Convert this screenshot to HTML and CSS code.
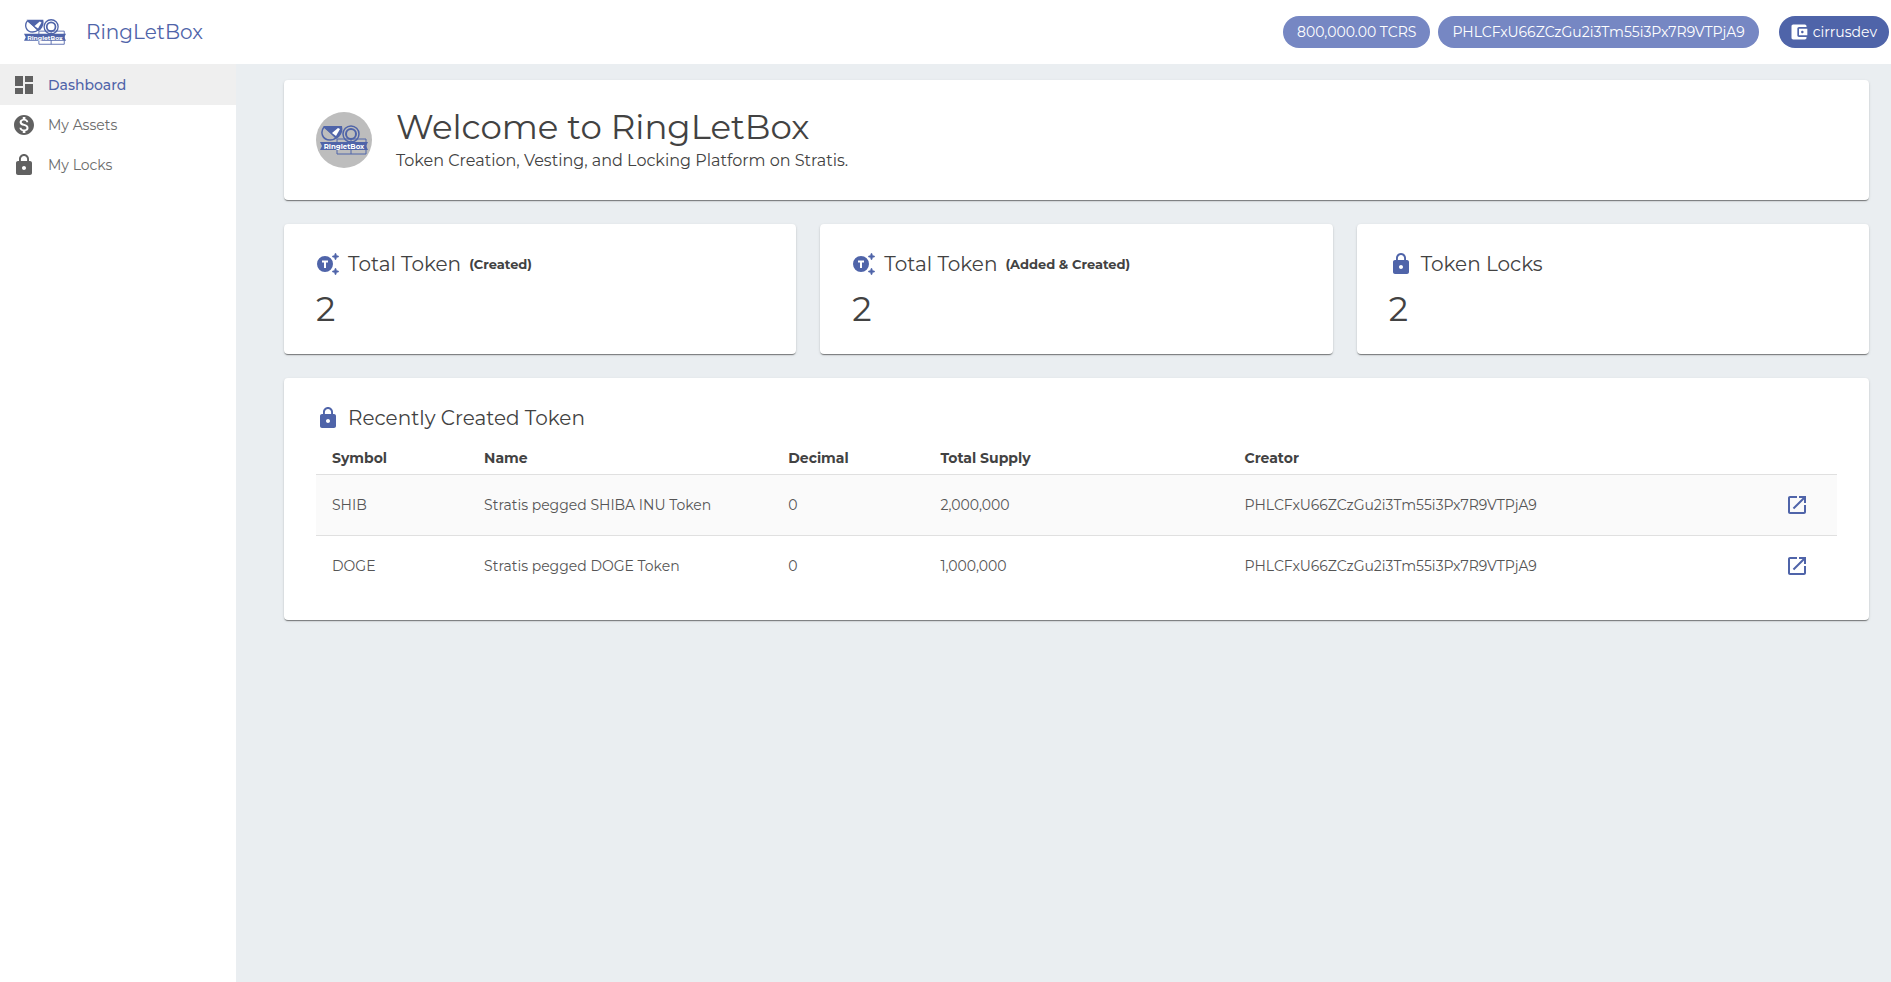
FILE: index.html
```html
<!DOCTYPE html>
<html lang="en">
<head>
<meta charset="utf-8">
<meta name="viewport" content="width=device-width, initial-scale=1">
<title>RingLetBox</title>
<link rel="stylesheet" href="styles.css">
</head>
<body>
<svg class="sprite" aria-hidden="true">
  <symbol id="logo" viewBox="0 0 48 30">
    <g fill="none" stroke="currentColor">
      <path d="M4 2c-4 5-2 13 6 13 3 0 5-1 7-3M4 2l13 11" stroke-width="1.500"/>
      <circle cx="31" cy="9" r="8" stroke-width="1.500"/>
      <circle cx="31" cy="9" r="5" stroke-width="2"/>
      <path d="M17 14h29v15H17zM31 14v15"/>
    </g>
    <path d="M3 1h19c1 4 0 8-3 11l-3 2z" fill="currentColor"/>
    <path d="M12 8l6-5 2 1-4 7z" fill="#fff"/>
    <path d="M0 17h48l-2 4 2 4H0l2-4z" fill="currentColor"/>
    <text class="logo-text" x="24" y="24" text-anchor="middle">RingletBox</text>
  </symbol>
  <symbol id="lock" viewBox="0 0 24 24">
    <path d="M18 8h-1V6c0-2.760-2.240-5-5-5S7 3.240 7 6v2H6c-1.100 0-2 .9-2 2v10c0 1.100.9 2 2 2h12c1.100 0 2-.9 2-2V10c0-1.100-.9-2-2-2zm-6 9c-1.100 0-2-.9-2-2s.9-2 2-2 2 .9 2 2-.9 2-2 2zm3.100-9H8.900V6c0-1.710 1.390-3.100 3.100-3.100s3.100 1.390 3.100 3.100v2z"/>
  </symbol>
  <symbol id="token" viewBox="0 0 24 24">
    <path d="M9 4a8 8 0 1 0 0 16A8 8 0 0 0 9 4zm3 6.500h-2V16H8v-5.500H6v-2h6z"/>
    <path d="M19.500 1l1.100 2.400L23 4.500l-2.400 1.100L19.500 8l-1.100-2.400L16 4.500l2.400-1.100zM19.500 16l1.100 2.400 2.400 1.100-2.400 1.100-1.100 2.400-1.100-2.400-2.400-1.100 2.400-1.100z" stroke="currentColor" stroke-width=".6"/>
  </symbol>
  <symbol id="open" viewBox="0 0 24 24">
    <path d="M19 19H5V5h7V3H5c-1.110 0-2 .9-2 2v14c0 1.100.89 2 2 2h14c1.100 0 2-.9 2-2v-7h-2v7zM14 3v2h3.590l-9.830 9.830 1.410 1.410L19 6.410V10h2V3h-7z"/>
  </symbol>
</svg>

<header class="appbar">
  <svg class="brand-logo"><use href="#logo"/></svg>
  <a class="brand" href="#">RingLetBox</a>
  <div class="account">
    <span class="chip">800,000.00 TCRS</span>
    <span class="chip">PHLCFxU66ZCzGu2i3Tm55i3Px7R9VTPjA9</span>
    <button class="chip chip-wallet" type="button">
      <svg class="chip-icon" viewBox="0 0 24 24"><path d="M21 18v1c0 1.100-.9 2-2 2H5c-1.110 0-2-.9-2-2V5c0-1.100.89-2 2-2h14c1.100 0 2 .9 2 2v1h-9c-1.110 0-2 .9-2 2v8c0 1.100.89 2 2 2h9zm-9-2h10V8H12v8zm4-2.500c-.83 0-1.500-.67-1.500-1.500s.67-1.500 1.500-1.500 1.500.67 1.500 1.500-.67 1.500-1.500 1.500z"/></svg>
      cirrusdev
    </button>
  </div>
</header>

<div class="layout">
  <nav class="sidebar">
    <a class="nav-link active" href="#">
      <svg class="icon" viewBox="0 0 24 24"><path d="M3 13h8V3H3v10zm0 8h8v-6H3v6zm10 0h8V11h-8v10zm0-18v6h8V3h-8z"/></svg>
      Dashboard
    </a>
    <a class="nav-link" href="#">
      <svg class="icon" viewBox="0 0 24 24"><path d="M12 2C6.480 2 2 6.480 2 12s4.480 10 10 10 10-4.480 10-10S17.520 2 12 2zm1.410 16.090V20h-2.670v-1.930c-1.710-.36-3.160-1.460-3.270-3.400h1.960c.1 1.050.82 1.870 2.650 1.870 1.960 0 2.400-.98 2.400-1.590 0-.83-.44-1.610-2.670-2.140-2.480-.6-4.180-1.620-4.180-3.670 0-1.720 1.390-2.840 3.110-3.210V4h2.670v1.950c1.860.45 2.790 1.860 2.850 3.390H14.300c-.05-1.110-.64-1.870-2.220-1.870-1.500 0-2.400.68-2.400 1.640 0 .84.65 1.390 2.670 1.910s4.180 1.390 4.180 3.910c-.01 1.830-1.380 2.830-3.120 3.160z"/></svg>
      My Assets
    </a>
    <a class="nav-link" href="#">
      <svg class="icon"><use href="#lock"/></svg>
      My Locks
    </a>
  </nav>

  <main class="content">
    <section class="card welcome">
      <div class="avatar"><svg class="avatar-logo"><use href="#logo"/></svg></div>
      <div>
        <h1 class="welcome-title">Welcome to RingLetBox</h1>
        <p class="welcome-text">Token Creation, Vesting, and Locking Platform on Stratis.</p>
      </div>
    </section>

    <div class="stats">
      <section class="card">
        <h2 class="card-title"><svg class="icon"><use href="#token"/></svg>Total Token <small>(Created)</small></h2>
        <p class="stat-value">2</p>
      </section>
      <section class="card">
        <h2 class="card-title"><svg class="icon"><use href="#token"/></svg>Total Token <small>(Added &amp; Created)</small></h2>
        <p class="stat-value">2</p>
      </section>
      <section class="card">
        <h2 class="card-title"><svg class="icon"><use href="#lock"/></svg>Token Locks</h2>
        <p class="stat-value">2</p>
      </section>
    </div>

    <section class="card">
      <h2 class="card-title"><svg class="icon"><use href="#lock"/></svg>Recently Created Token</h2>
      <table class="tokens">
        <colgroup>
          <col class="col-sm"><col class="col-md"><col class="col-sm"><col class="col-md"><col class="col-lg"><col class="col-sm">
        </colgroup>
        <thead>
          <tr>
            <th>Symbol</th>
            <th>Name</th>
            <th>Decimal</th>
            <th>Total Supply</th>
            <th>Creator</th>
            <th></th>
          </tr>
        </thead>
        <tbody>
          <tr>
            <td>SHIB</td>
            <td>Stratis pegged SHIBA INU Token</td>
            <td>0</td>
            <td>2,000,000</td>
            <td>PHLCFxU66ZCzGu2i3Tm55i3Px7R9VTPjA9</td>
            <td><button class="icon-btn" type="button" aria-label="Open SHIB"><svg class="icon"><use href="#open"/></svg></button></td>
          </tr>
          <tr>
            <td>DOGE</td>
            <td>Stratis pegged DOGE Token</td>
            <td>0</td>
            <td>1,000,000</td>
            <td>PHLCFxU66ZCzGu2i3Tm55i3Px7R9VTPjA9</td>
            <td><button class="icon-btn" type="button" aria-label="Open DOGE"><svg class="icon"><use href="#open"/></svg></button></td>
          </tr>
        </tbody>
      </table>
    </section>
  </main>
</div>
</body>
</html>
```
FILE: styles.css
```css
:root {
  --primary: #4f64a9;
  --primary-light: #7687c3;
  --text: #424242;
  --line: #e0e0e0;
}

* {
  box-sizing: border-box;
}

body {
  margin: 0;
  min-height: 100vh;
  display: flex;
  flex-direction: column;
  background-color: #eaeef1;
  color: var(--text);
  font-family: Montserrat, Inter, sans-serif;
  font-size: 14px;
  font-weight: 400;
  line-height: 20px;
}

h1, h2, p {
  margin: 0;
  font-weight: 400;
}

a {
  text-decoration: none;
}

.sprite {
  display: none;
}

.icon {
  flex: none;
  display: block;
  width: 24px;
  height: 24px;
  fill: currentColor;
}

.logo-text {
  font-size: 7px;
  font-weight: 700;
  fill: #fff;
}

/* top bar */
.appbar {
  display: flex;
  align-items: center;
  height: 64px;
  padding: 0 2px 0 24px;
  background-color: #fff;
}

.brand-logo {
  width: 42px;
  height: 28px;
  margin-right: 20px;
  color: var(--primary);
}

.brand {
  color: var(--primary);
  font-size: 20px;
}

.account {
  display: flex;
  gap: 8px;
  margin-left: auto;
}

.chip {
  display: flex;
  align-items: center;
  height: 32px;
  padding: 0 14px;
  border: none;
  border-radius: 16px;
  background-color: var(--primary-light);
  color: #fff;
  font-family: inherit;
  font-size: 14px;
}

.chip-wallet {
  gap: 4px;
  margin-left: 12px;
  padding: 0 12px 0 10px;
  background-color: var(--primary);
  cursor: pointer;
}

.chip-icon {
  width: 20px;
  height: 20px;
  fill: currentColor;
}

/* menu */
.layout {
  flex: 1;
  display: flex;
}

.sidebar {
  flex: none;
  width: 236px;
  background-color: #fff;
}

.nav-link {
  display: flex;
  align-items: center;
  gap: 12px;
  height: 40px;
  padding: 0 12px;
  color: #6b6b6b;
}

.nav-link.active {
  height: 41px;
  background-color: #efefef;
  color: var(--primary);
  font-weight: 500;
}

.nav-link .icon {
  color: #616161;
}

/* page */
.content {
  flex: 1;
  display: flex;
  flex-direction: column;
  gap: 24px;
  padding: 16px 22px 16px 48px;
}

.card {
  padding: 24px 32px;
  border-radius: 4px;
  background-color: #fff;
  box-shadow: 0 2px 1px -1px rgba(0, 0, 0, 0.3), 0 1px 1px 0 rgba(0, 0, 0, 0.2), 0 1px 3px 0 rgba(0, 0, 0, 0.12);
}

.card-title {
  display: flex;
  align-items: center;
  gap: 8px;
  margin-bottom: 8px;
  font-size: 20px;
  line-height: 32px;
}

.card-title .icon {
  color: var(--primary);
}

.card-title small {
  font-size: 13px;
  font-weight: 700;
}

.welcome {
  display: flex;
  align-items: center;
  gap: 24px;
  padding: 26px 32px;
}

.avatar {
  display: flex;
  align-items: center;
  justify-content: center;
  width: 56px;
  height: 56px;
  border-radius: 50%;
  background-color: #bdbdbd;
  color: var(--primary);
}

.avatar-logo {
  width: 48px;
  height: 30px;
}

.welcome-title {
  font-size: 34px;
  line-height: 42px;
}

.welcome-text {
  font-size: 16px;
  line-height: 26px;
}

.stats {
  display: grid;
  grid-template-columns: repeat(3, 1fr);
  gap: 24px;
}

.stat-value {
  font-size: 34px;
  line-height: 42px;
}

.tokens {
  width: 100%;
  table-layout: fixed;
  border-collapse: separate;
  border-spacing: 0;
}

.col-sm {
  width: 10%;
}

.col-md {
  width: 20%;
}

.col-lg {
  width: 30%;
}

.tokens th {
  height: 33px;
  padding: 0 16px;
  border-bottom: 1px solid var(--line);
  text-align: left;
  font-weight: 700;
}

.tokens td {
  height: 60px;
  padding: 0 16px;
  color: #555;
}

.tokens tbody tr:first-child td {
  height: 61px;
  border-bottom: 1px solid var(--line);
  background-color: #fafafa;
}

.icon-btn {
  display: block;
  margin-left: auto;
  padding: 12px;
  border: none;
  background: none;
  color: var(--primary);
  cursor: pointer;
}
```
